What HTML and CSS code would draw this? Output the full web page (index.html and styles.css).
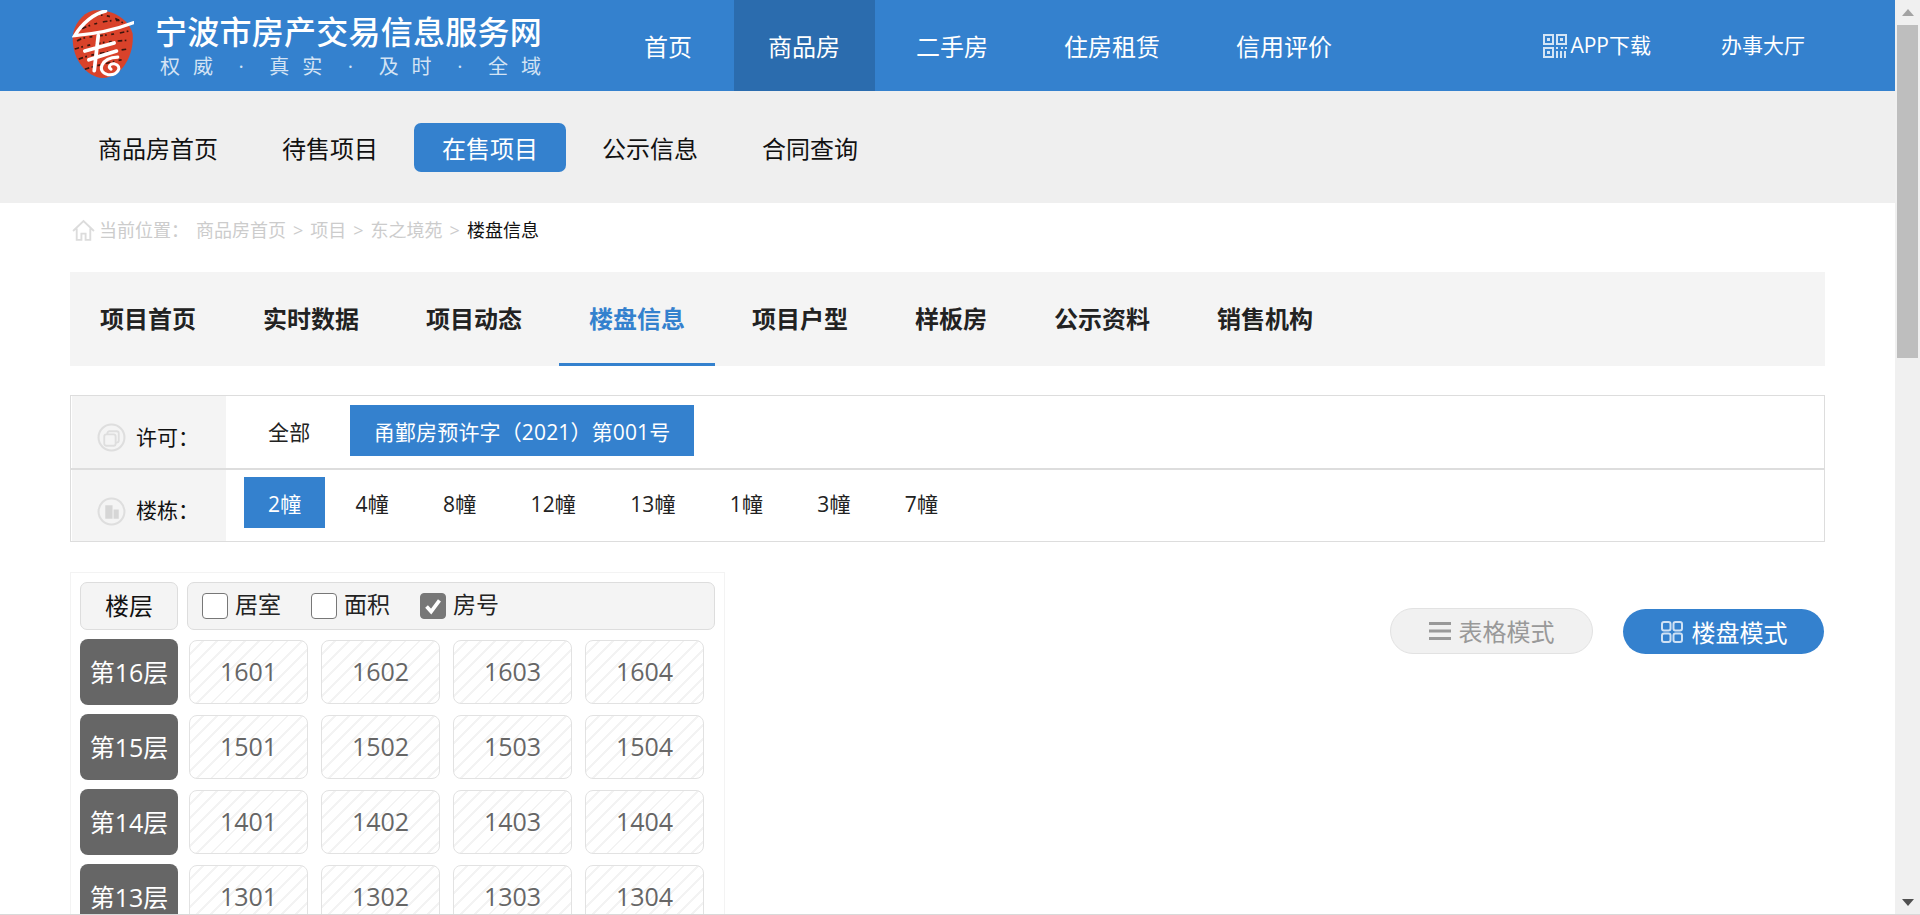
FILE: index.html
```html
<!DOCTYPE html>
<html lang="zh-CN">
<head>
<meta charset="utf-8">
<title>宁波市房产交易信息服务网</title>
<link rel="stylesheet" href="styles.css">
</head>
<body>
<div class="app">
  <main class="page">
    <header class="topbar">
      <a class="brand">
        <svg class="seal" viewBox="42 30 180 202" aria-hidden="true">
          <defs><filter id="soft" x="-5%" y="-5%" width="110%" height="110%"><feGaussianBlur stdDeviation="1.600"/></filter></defs>
          <g filter="url(#soft)">
            <path d="M100 32C150 26 205 50 220 100C226 160 190 232 130 232C85 228 40 180 42 110C44 75 70 40 100 32Z" fill="#d9432b"/>
            <path d="M55 122C80 104 130 112 210 92M48 146C90 132 150 122 212 120M60 176C100 160 160 152 205 146M78 206C110 196 150 186 195 176M105 48C130 40 170 50 200 75M70 86C100 70 140 62 180 60" stroke="#3a1710" stroke-width="5" stroke-dasharray="14 7 5 13 9 17" fill="none"/>
            <path d="M140 33C105 40 70 70 48 106C100 102 170 88 222 68" stroke="#fff" stroke-width="10" fill="none" stroke-linecap="round"/>
            <path d="M118 106C114 140 110 178 106 210M78 152L165 128M90 178L172 152" stroke="#fff" stroke-width="11" fill="none" stroke-linecap="round"/>
            <path d="M176 170C125 172 112 214 146 222C176 226 192 196 166 190C152 188 146 200 156 206" stroke="#fff" stroke-width="9" fill="none" stroke-linecap="round"/>
          </g>
        </svg>
        <div class="brand-text">
          <div class="brand-title">宁波市房产交易信息服务网</div>
          <div class="brand-slogan"><span>权威</span><i>·</i><span>真实</span><i>·</i><span>及时</span><i>·</i><span>全域</span></div>
        </div>
      </a>
      <nav class="mainnav">
        <a class="mainnav-item">首页</a>
        <a class="mainnav-item is-active">商品房</a>
        <a class="mainnav-item">二手房</a>
        <a class="mainnav-item">住房租赁</a>
        <a class="mainnav-item">信用评价</a>
      </nav>
      <div class="toplinks">
        <a class="toplink">
          <svg class="qr" viewBox="0 0 24 24" aria-hidden="true">
            <g fill="none" stroke="#d5e5f5" stroke-width="2"><rect x="1" y="1" width="9" height="9"/><rect x="14" y="1" width="9" height="9"/><rect x="1" y="14" width="9" height="9"/></g>
            <g fill="#d5e5f5"><rect x="4" y="4" width="3" height="3"/><rect x="17" y="4" width="3" height="3"/><rect x="4" y="17" width="3" height="3"/><rect x="13" y="13" width="2" height="2"/><rect x="18" y="13" width="2" height="2"/><rect x="22" y="13" width="2" height="2"/><rect x="13" y="17" width="2" height="7"/><rect x="17" y="17" width="2" height="7"/><rect x="21" y="17" width="2" height="7"/></g>
          </svg>APP下载</a>
        <a class="toplink toplink-hall">办事大厅</a>
      </div>
    </header>

    <nav class="subnav">
      <a class="subnav-item">商品房首页</a>
      <a class="subnav-item">待售项目</a>
      <a class="subnav-item is-active">在售项目</a>
      <a class="subnav-item">公示信息</a>
      <a class="subnav-item">合同查询</a>
    </nav>

    <div class="content">
      <div class="crumbs">
        <svg class="home" viewBox="0 0 22 22" aria-hidden="true"><path d="M1 11.500L11 2l10 9.500M4.500 9v11h4.500v-6h4v6h4.500V9" fill="none" stroke="#dcdcdc" stroke-width="1.800"/></svg>
        <span class="crumb-label">当前位置：</span>
        <a>商品房首页</a><b>&gt;</b><a>项目</a><b>&gt;</b><a>东之境苑</a><b>&gt;</b><em>楼盘信息</em>
      </div>

      <nav class="tabs">
        <a class="tab">项目首页</a>
        <a class="tab">实时数据</a>
        <a class="tab">项目动态</a>
        <a class="tab is-active">楼盘信息</a>
        <a class="tab">项目户型</a>
        <a class="tab">样板房</a>
        <a class="tab">公示资料</a>
        <a class="tab">销售机构</a>
      </nav>

      <section class="filters">
        <div class="filter-row filter-row-permit">
          <div class="filter-label">
            <svg class="filter-icon" viewBox="0 0 28 28" aria-hidden="true"><circle cx="14" cy="14" r="12.500" fill="none" stroke="#dedede" stroke-width="2"/><rect x="10" y="8" width="11" height="11" rx="2" fill="none" stroke="#dedede" stroke-width="1.800"/><rect x="7" y="11" width="11" height="11" rx="2" fill="#f4f4f4" stroke="#dedede" stroke-width="1.800"/></svg>
            <span>许可：</span>
          </div>
          <div class="filter-options filter-options-wide">
            <a class="option">全部</a>
            <a class="option is-active">甬鄞房预许字（2021）第001号</a>
          </div>
        </div>
        <div class="filter-row">
          <div class="filter-label">
            <svg class="filter-icon" viewBox="0 0 28 28" aria-hidden="true"><circle cx="14" cy="14" r="12.500" fill="none" stroke="#dedede" stroke-width="2"/><path d="M8 21V8h7v13zM16 21v-9h5v9z" fill="#d6d6d6"/></svg>
            <span>楼栋：</span>
          </div>
          <div class="filter-options">
            <a class="option is-active">2幢</a>
            <a class="option">4幢</a>
            <a class="option">8幢</a>
            <a class="option">12幢</a>
            <a class="option">13幢</a>
            <a class="option">1幢</a>
            <a class="option">3幢</a>
            <a class="option">7幢</a>
          </div>
        </div>
      </section>

      <section class="board">
        <div class="grid">
          <div class="grid-head">
            <div class="floor-title">楼层</div>
            <div class="toggles">
              <label class="check"><span class="box"></span><span class="check-text">居室</span></label>
              <label class="check"><span class="box"></span><span class="check-text">面积</span></label>
              <label class="check"><span class="box is-on"><svg viewBox="0 0 26 26" aria-hidden="true"><path d="M6 13.500l5 5.500 9-12" fill="none" stroke="#fff" stroke-width="4"/></svg></span><span class="check-text">房号</span></label>
            </div>
          </div>
          <div class="floor">
            <div class="floor-name">第16层</div>
            <div class="room">1601</div><div class="room">1602</div><div class="room">1603</div><div class="room">1604</div>
          </div>
          <div class="floor">
            <div class="floor-name">第15层</div>
            <div class="room">1501</div><div class="room">1502</div><div class="room">1503</div><div class="room">1504</div>
          </div>
          <div class="floor">
            <div class="floor-name">第14层</div>
            <div class="room">1401</div><div class="room">1402</div><div class="room">1403</div><div class="room">1404</div>
          </div>
          <div class="floor">
            <div class="floor-name">第13层</div>
            <div class="room">1301</div><div class="room">1302</div><div class="room">1303</div><div class="room">1304</div>
          </div>
        </div>

        <div class="modes">
          <a class="mode">
            <svg class="mode-icon" viewBox="0 0 22 20" aria-hidden="true"><path d="M0 2.500h22M0 10h22M0 17.500h22" stroke="#999" stroke-width="3.200"/></svg>表格模式</a>
          <a class="mode is-active">
            <svg class="mode-icon" viewBox="0 0 24 24" aria-hidden="true"><g fill="none" stroke="#cfe1f4" stroke-width="2"><rect x="2" y="2" width="8.500" height="8.500" rx="2"/><rect x="13.500" y="2" width="8.500" height="8.500" rx="2"/><rect x="2" y="13.500" width="8.500" height="8.500" rx="2"/><rect x="13.500" y="13.500" width="8.500" height="8.500" rx="2"/></g></svg>楼盘模式</a>
        </div>
      </section>
    </div>
  </main>

  <aside class="scrollbar" aria-hidden="true">
    <div class="scroll-btn"><span class="arrow-up"></span></div>
    <div class="scroll-thumb"></div>
    <div class="scroll-rest"></div>
    <div class="scroll-btn"><span class="arrow-down"></span></div>
  </aside>
  <div class="bottom-edge"></div>
</div>
</body>
</html>
```

FILE: styles.css
```css
* { box-sizing: border-box; }
html, body { margin: 0; height: 100%; overflow: hidden; background: #fff; }
body { font-family: "Open Sans", "Noto Sans CJK SC", sans-serif; line-height: 1.3; color: #111; }
a { color: inherit; text-decoration: none; }
em, i { font-style: normal; }

.app { display: flex; height: 915px; position: relative; }
.page { flex: 1; min-width: 0; height: 915px; overflow: hidden; }

/* top bar */
.topbar { display: flex; height: 91px; background: #3481ce; color: #fff; padding: 0 90px 0 72px; }
.brand { display: flex; align-items: flex-start; width: 525px; flex: none; }
.seal { width: 62px; height: 68px; margin-top: 10px; flex: none; }
.brand-text { margin-left: 21px; padding-top: 14px; }
.brand-title { font-size: 32px; line-height: 36px; font-weight: 500; letter-spacing: .25px; white-space: nowrap; }
.brand-slogan { display: flex; justify-content: space-between; align-items: center; width: 381px; margin: 4px 0 0 5px; font-size: 20px; line-height: 26px; color: #d3e3f4; }
.brand-slogan span { letter-spacing: 13px; margin-right: -13px; }
.brand-slogan i { display: flex; justify-content: center; width: 0; }
.mainnav { display: flex; gap: 7px; margin-left: 12.500px; }
.mainnav-item { display: flex; align-items: center; padding: 2px 34.500px 0; font-size: 24px; height: 91px; }
.mainnav-item.is-active { background: #2b6cae; }
.toplinks { display: flex; align-items: center; margin-left: auto; font-size: 21px; }
.toplink { display: flex; align-items: center; height: 91px; }
.qr { width: 24px; height: 24px; margin-right: 3px; }
.toplink-hall { margin-left: 70px; }

/* sub navigation */
.subnav { display: flex; align-items: center; gap: 8px; height: 112px; padding-left: 70px; background: #efefef; }
.subnav-item { height: 49px; margin-top: 1px; line-height: 52px; padding: 0 28px; font-size: 24px; border-radius: 7px; }
.subnav-item.is-active { background: #3481ce; color: #fff; }

.content { margin: 0 70px; }

/* breadcrumbs */
.crumbs { display: flex; align-items: center; height: 54px; margin-bottom: 15px; padding: 2px 0 0 2px; font-size: 18px; color: #ccc; white-space: nowrap; }
.home { width: 23px; height: 23px; margin: -2px 4px 0 0; }
.crumb-label { width: 97px; }
.crumbs b { font-weight: 400; margin: 0 7px; }
.crumbs em { color: #111; }

/* tabs */
.tabs { display: flex; gap: 7px; height: 94px; background: #f4f4f4; }
.tab { height: 94px; line-height: 94px; padding: 0 30px; font-size: 24px; font-weight: 700; color: #222; }
.tab.is-active { color: #3481ce; border-bottom: 3px solid #3481ce; }

/* filters */
.filters { margin-top: 29px; }
.filter-row { display: flex; height: 73px; border: 1px solid #ddd; }
.filter-row-permit { height: 74px; }
.filter-label { display: flex; align-items: center; width: 154px; flex: none; padding: 11px 0 0 25px; margin: 0 0 0 1px; background: #f4f4f4; font-size: 21px; color: #111; }
.filter-icon { width: 29px; height: 29px; margin-right: 10px; flex: none; }
.filter-options { display: flex; align-items: flex-start; gap: 6.200px; padding: 7px 0 0 18px; }
.filter-options-wide { gap: 15.500px; padding-top: 9px; }
.option { height: 51px; line-height: 54px; padding: 0 24px; font-size: 21px; letter-spacing: .15px; color: #222; white-space: nowrap; }
.option.is-active { background: #3481ce; color: #fff; }

/* building board */
.board { display: flex; justify-content: space-between; align-items: flex-start; margin-top: 30px; }
.grid { width: 655px; flex: none; padding: 9px 9px 0; border: 1px solid #f3f3f3; }
.grid-head { display: flex; gap: 9px; height: 48px; }
.floor-title { display: flex; align-items: center; justify-content: center; width: 98px; flex: none; background: #f4f4f4; border: 1px solid #ddd; border-radius: 7px; font-size: 24px; }
.toggles { display: flex; align-items: center; flex: 1; gap: 30px; padding-left: 14px; background: #f4f4f4; border: 1px solid #ddd; border-radius: 7px; }
.check { display: flex; align-items: center; font-size: 23px; color: #222; }
.check-text { padding-bottom: 3px; }
.box { display: block; width: 26px; height: 26px; margin-right: 7px; background: #fff; border: 1px solid #777; border-radius: 4px; }
.box.is-on { background: #777; }
.box svg { display: block; width: 24px; height: 24px; }
.floor { display: flex; align-items: center; height: 66px; margin-top: 9px; }
.floor-name { display: flex; align-items: center; justify-content: center; width: 98px; height: 66px; flex: none; margin-right: 11px; background: #666; border-radius: 8px; color: #fff; font-size: 25px; }
.room { display: flex; align-items: center; justify-content: center; width: 119px; height: 64px; flex: none; margin-right: 13px; padding-bottom: 2px; border: 1px solid #e2e2e2; border-radius: 8px; color: #666; font-size: 25px; background: repeating-linear-gradient(135deg, #fff 0, #fff 8px, #f3f3f3 8px, #f3f3f3 10px); }

/* view modes */
.modes { display: flex; align-items: flex-end; gap: 30px; margin: 36px 1px 0 0; }
.mode { display: flex; align-items: center; justify-content: center; width: 203px; height: 46px; padding-top: 2px; font-size: 24px; border-radius: 23px; background: #f1f1f1; border: 1px solid #e2e2e2; color: #999; }
.mode.is-active { width: 201px; height: 45px; background: #3481ce; border: 0; color: #fff; }
.mode-icon { width: 22px; height: 20px; margin: -2px 8px 0 0; }
.is-active .mode-icon { width: 24px; height: 24px; }

/* window scrollbar */
.scrollbar { display: flex; flex-direction: column; width: 25px; flex: none; background: #f0f0f0; }
.scroll-btn { display: flex; align-items: center; justify-content: center; height: 25px; flex: none; }
.scroll-thumb { height: 333px; margin: 0 2px; background: #bebebe; flex: none; }
.scroll-rest { flex: 1; }
.arrow-up { border: 6px solid transparent; border-top: 0; border-bottom: 7px solid #a3a3a3; }
.arrow-down { border: 6px solid transparent; border-bottom: 0; border-top: 7px solid #505050; }
.bottom-edge { position: absolute; left: 0; right: 0; bottom: 0; height: 1px; background: #d9d9d9; }
```
